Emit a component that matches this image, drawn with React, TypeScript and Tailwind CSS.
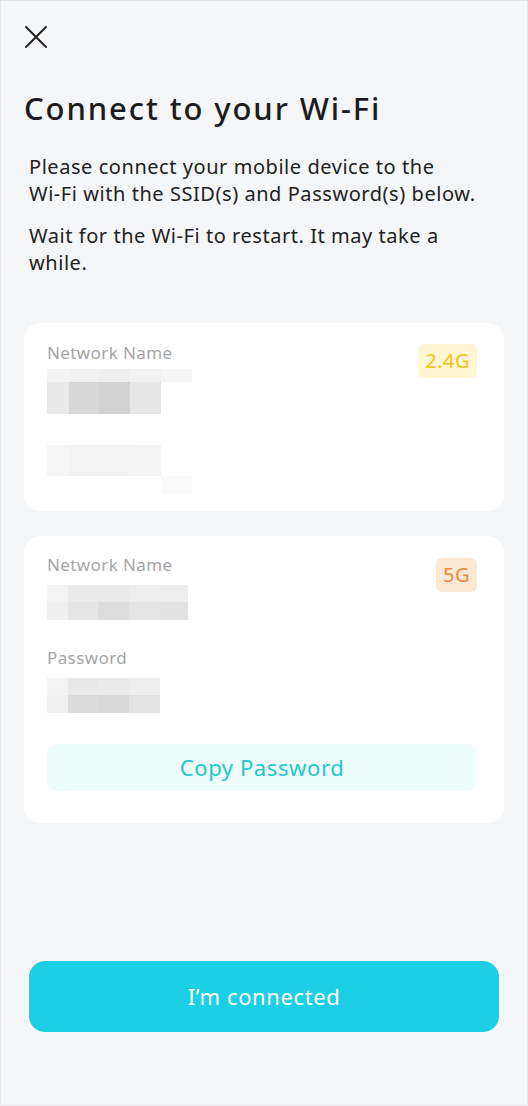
import React from 'react'

const font = { fontFamily: '"Noto Sans", "Open Sans", sans-serif' }

// pixelated blur placeholders: each row is a list of [width, colour]
type Cell = [number, string]

function Mosaic({ rows }: { rows: { h: number; cells: Cell[] }[] }) {
  return (
    <div className="flex flex-col">
      {rows.map((r, i) => (
        <div key={i} className="flex" style={{ height: r.h }}>
          {r.cells.map(([w, c], j) => (
            <div key={j} style={{ width: w, background: c }} />
          ))}
        </div>
      ))}
    </div>
  )
}

function Badge({ label, tone }: { label: string; tone: 'yellow' | 'orange' }) {
  const cls =
    tone === 'yellow'
      ? 'bg-[#fff6d3] text-[#f0c419] px-[7px]'
      : 'bg-[#fde8d4] text-[#e88a3a] px-[7px]'
  return (
    <div className={`${cls} h-[34px] rounded-[6px] flex items-center text-[20px] tracking-[0.5px]`}>{label}</div>
  )
}

export default function App() {
  return (
    <div
      style={font}
      className="w-[528px] h-[1106px] bg-[#f5f6f8] border border-[#e4e4e6] flex flex-col text-[#1c1c1e] overflow-hidden"
    >
      <div className="pl-[23px] pt-[24px]">
        <svg width="24" height="24" viewBox="0 0 24 24" fill="none" stroke="#222" strokeWidth="2" strokeLinecap="round">
          <path d="M2 2 L22 22 M22 2 L2 22" />
        </svg>
      </div>

      <h1 className="pl-[23px] mt-[38px] text-[31px] font-medium tracking-[1.9px] leading-[42px]">
        Connect to your Wi‑Fi
      </h1>

      <div className="pl-[28px] pr-[40px] mt-[24px] text-[20px] tracking-[0.55px] leading-[27px] text-[#222]">
        <p>Please connect your mobile device to the Wi‑Fi with the SSID(s) and Password(s) below.</p>
        <p className="mt-[15px]">Wait for the Wi‑Fi to restart. It may take a while.</p>
      </div>

      <div className="mx-[23px] mt-[47px] bg-white rounded-[16px] h-[188px] pl-[23px] pr-[27px] pt-[18px] flex justify-between">
        <div className="flex flex-col">
          <div className="text-[17px] tracking-[0.4px] text-[#a5a5a8] leading-[24px]">Network Name</div>
          <Mosaic
            rows={[
              { h: 4, cells: [[145, '#ffffff']] },
              { h: 13, cells: [[22, '#f4f4f4'], [30, '#f1f1f1'], [31, '#efefef'], [31, '#f2f2f2'], [31, '#f6f6f6']] },
              { h: 32, cells: [[22, '#e9e9e9'], [30, '#d8d8d8'], [31, '#d2d2d2'], [31, '#e6e6e6']] },
            ]}
          />
          <div className="h-[31px]" />
          <Mosaic
            rows={[
              { h: 31, cells: [[22, '#f6f6f6'], [60, '#f3f3f3'], [32, '#f5f5f5']] },
              { h: 18, cells: [[114, '#ffffff'], [31, '#fbfbfb']] },
            ]}
          />
        </div>
        <div className="pt-[3px]">
          <Badge label="2.4G" tone="yellow" />
        </div>
      </div>

      <div className="mx-[23px] mt-[25px] bg-white rounded-[16px] h-[287px] pl-[23px] pr-[27px] pt-[17px] flex flex-col">
        <div className="flex justify-between">
          <div className="flex flex-col">
            <div className="text-[17px] tracking-[0.4px] text-[#a5a5a8] leading-[24px]">Network Name</div>
            <Mosaic
              rows={[
                { h: 8, cells: [[140, '#ffffff']] },
                { h: 17, cells: [[21, '#f3f3f3'], [30, '#ebebeb'], [31, '#ebebeb'], [31, '#eeeeee'], [28, '#ededed']] },
                { h: 18, cells: [[21, '#efefef'], [30, '#e5e5e5'], [31, '#dddddd'], [31, '#e4e4e4'], [28, '#e1e1e1']] },
              ]}
            />
          </div>
          <div className="pt-[5px]">
            <Badge label="5G" tone="orange" />
          </div>
        </div>
        <div className="mt-[26px] text-[17px] tracking-[0.4px] text-[#a5a5a8] leading-[24px]">Password</div>
        <div className="mt-[8px]">
          <Mosaic
            rows={[
              { h: 17, cells: [[21, '#f3f3f3'], [30, '#e9e9e9'], [31, '#ebebeb'], [31, '#eeeeee']] },
              { h: 18, cells: [[21, '#f0f0f0'], [30, '#dcdcdc'], [31, '#dadada'], [31, '#e3e3e3']] },
            ]}
          />
        </div>
        <button className="mt-[31px] h-[47px] rounded-[10px] bg-[#eefcfb] text-[#26c6cf] text-[22px] tracking-[0.6px] w-full">
          Copy Password
        </button>
      </div>

      <div className="flex-1" />

      <button className="mx-[28px] mb-[73px] h-[71px] rounded-[16px] bg-[#1dcfe4] text-white text-[22px] tracking-[0.6px]">
        I’m connected
      </button>
    </div>
  )
}
